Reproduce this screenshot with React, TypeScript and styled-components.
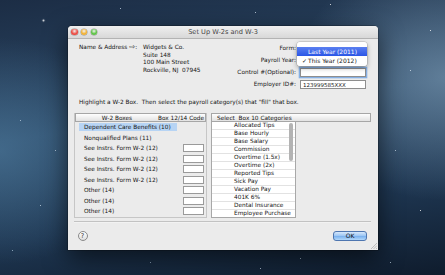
import styled, { createGlobalStyle } from 'styled-components'

const GlobalStyle = createGlobalStyle`
  html, body {
    margin: 0;
    padding: 0;
  }
  body {
    width: 445px;
    height: 275px;
    overflow: hidden;
    font-family: 'DejaVu Sans', 'Liberation Sans', sans-serif;
    color: #151515;
  }
`

const Desktop = styled.div`
  position: relative;
  width: 445px;
  height: 275px;
  box-sizing: border-box;
  padding: 26px 67px 0 68px;
  overflow: hidden;
  background:
    radial-gradient(ellipse 45% 60% at 100% 28%, rgba(130, 160, 185, 0.6), transparent 75%),
    radial-gradient(ellipse 40% 55% at 0% 55%, rgba(80, 125, 160, 0.6), transparent 75%),
    linear-gradient(172deg, #1c2d45 0%, #2c4a68 42%, #1e3651 72%, #0f1c2d 100%);

  &::before {
    content: '';
    position: absolute;
    left: 0;
    top: 0;
    width: 1px;
    height: 1px;
    border-radius: 50%;
    box-shadow:
      43px 20px 1px 0.5px #fff, 120px 8px 0 #cfe0ee, 255px 12px 0 #dce8f2, 330px 4px 0 #fff,
      20px 120px 0 #bcd0e0, 40px 205px 0 #cfe0ee, 12px 250px 0 #a9c2d8, 410px 70px 0 #dce8f2,
      395px 150px 0 #cfe0ee, 420px 210px 0.5px #fff, 390px 262px 0 #bcd0e0, 150px 262px 0 #a9c2d8,
      260px 268px 0 #cfe0ee, 430px 30px 0 #fff, 300px 258px 0 #bcd0e0, 55px 150px 0 #cfe0ee;
  }
`

const Window = styled.div`
  position: relative;
  width: 310px;
  height: 224px;
  display: flex;
  flex-direction: column;
  background: #ebebeb;
  border-radius: 4px 4px 0 0;
  box-shadow: 0 8px 24px rgba(0, 0, 0, 0.6), 0 0 0 0.5px rgba(0, 0, 0, 0.4);
  font-size: 5.8px;
`

const TitleBar = styled.div`
  height: 12px;
  display: grid;
  grid-template-columns: 1fr auto 1fr;
  align-items: center;
  padding: 0 3px;
  background: linear-gradient(#efefef, #d8d8d8);
  border-bottom: 0.5px solid #b3b3b3;
  border-radius: 4px 4px 0 0;
`

const Lights = styled.div`
  display: flex;
  gap: 3.3px;
`

const Light = styled.span<{ $c: string }>`
  width: 6.6px;
  height: 6.6px;
  border-radius: 50%;
  background: radial-gradient(circle at 50% 35%, #fff8 0%, ${(p) => p.$c} 55%);
  box-shadow: 0 0 0 0.5px rgba(0, 0, 0, 0.35);
`

const Title = styled.div`
  font-size: 6.6px;
  color: #454545;
`

const Body = styled.div`
  flex: 1;
  display: flex;
  flex-direction: column;
  padding: 3px 7px 0 6px;
`

const TopRow = styled.div`
  display: flex;
  justify-content: space-between;
  padding: 0 5px;
`

const AddressBlock = styled.div`
  display: grid;
  grid-template-columns: 61px auto;
  column-gap: 3px;
  padding-top: 2px;
  line-height: 7.7px;
`

const AddrLabel = styled.div`
  white-space: nowrap;
`

const Arrow = styled.span`
  font-size: 7px;
`

const FormGrid = styled.div`
  position: relative;
  display: grid;
  grid-template-columns: auto 67px;
  grid-auto-rows: 12px;
  column-gap: 3px;
  align-items: center;
`

const FieldLabel = styled.div`
  text-align: right;
  white-space: nowrap;
`

const Popup = styled.div`
  height: 9px;
  box-sizing: border-box;
  border: 0.5px solid #9c9c9c;
  border-radius: 3px;
  background: linear-gradient(#fff, #ececec);
`

const TextBox = styled.div<{ $focus?: boolean }>`
  height: 9px;
  box-sizing: border-box;
  margin-left: 1px;
  padding-left: 2px;
  border: 0.5px solid #8e8e8e;
  background: #fff;
  line-height: 8px;
  font-size: 5.5px;
  ${(p) => p.$focus && 'box-shadow: 0 0 0 1.3px #86b0e4;'}
`

const Menu = styled.div`
  position: absolute;
  top: 0;
  right: -1px;
  width: 70px;
  height: 24px;
  box-sizing: border-box;
  padding-top: 5px;
  background: rgba(255, 255, 255, 0.98);
  border-radius: 3px;
  box-shadow: 0 2px 5px rgba(0, 0, 0, 0.35), 0 0 0 0.5px rgba(0, 0, 0, 0.2);
`

const MenuItem = styled.div<{ $active?: boolean }>`
  height: 9px;
  display: flex;
  align-items: center;
  padding-left: 5px;
  white-space: nowrap;
  font-size: 6px;
  ${(p) =>
    p.$active &&
    `
    background: linear-gradient(#5a7ff0, #2b56e6);
    color: #fff;
  `}
`

const Check = styled.span`
  width: 6px;
  display: inline-block;
`

const Instruction = styled.div`
  margin-top: 8px;
  padding-left: 5px;
  line-height: 8px;
  white-space: nowrap;
`

const Tables = styled.div`
  margin-top: 7px;
  height: 105px;
  display: grid;
  grid-template-columns: 133px 1fr;
  column-gap: 4px;
`

const BoxTable = styled.div`
  display: flex;
  flex-direction: column;
  border: 0.5px solid #c6c6c6;
  border-top: none;
`

const HeaderBar = styled.div`
  height: 9px;
  box-sizing: border-box;
  display: flex;
  align-items: center;
  border: 0.5px solid #a6a6a6;
  background: linear-gradient(#fefefe, #e2e2e2);
  white-space: nowrap;
`

const BoxHeaderMain = styled.div`
  width: 83px;
  text-align: center;
`

const BoxHeaderCode = styled.div`
  flex: 1;
  text-align: right;
  padding-right: 1px;
`

const BoxRow = styled.div`
  height: 10.5px;
  display: grid;
  grid-template-columns: 102px 1fr;
  align-items: center;
`

const BoxName = styled.div<{ $selected?: boolean }>`
  margin-left: 4px;
  height: 8px;
  line-height: 8px;
  padding-left: 5px;
  white-space: nowrap;
  background: ${(p) => (p.$selected ? '#b7d4f4' : 'transparent')};
`

const CodeInput = styled.div`
  margin-left: 6px;
  width: 21px;
  height: 8px;
  box-sizing: border-box;
  border: 0.5px solid #9a9a9a;
  background: #fff;
`

const CatPanel = styled.div`
  display: flex;
  flex-direction: column;
`

const CatHeader = styled(HeaderBar)`
  padding-left: 5px;
`

const CatList = styled.div`
  position: relative;
  width: 85px;
  height: 96px;
  box-sizing: border-box;
  border: 0.5px solid #a8a8a8;
  border-top: none;
  background: #fff;
  overflow: hidden;
`

const CatRow = styled.div`
  height: 8px;
  box-sizing: border-box;
  line-height: 7.5px;
  padding: 0 5px 0 22px;
  border-bottom: 0.5px solid #e2e2e2;
  white-space: nowrap;
  overflow: hidden;
`

const ScrollThumb = styled.div`
  position: absolute;
  right: 2px;
  top: 1px;
  width: 4px;
  height: 38px;
  border-radius: 2px;
  background: #b3b3b3;
`

const Divider = styled.div`
  margin-top: 3px;
  height: 0.5px;
  background: #c2c2c2;
  box-shadow: 0 0.5px 0 #fafafa;
`

const Footer = styled.div`
  flex: 1;
  display: flex;
  align-items: center;
  justify-content: space-between;
  padding: 0 4px 0 3.5px;
`

const HelpButton = styled.div`
  width: 10px;
  height: 10px;
  box-sizing: border-box;
  border-radius: 50%;
  border: 0.5px solid #8a8a8a;
  background: linear-gradient(#ffffff, #dedede);
  display: grid;
  place-items: center;
  font-size: 6.5px;
  color: #333;
`

const OkButton = styled.div`
  width: 34px;
  height: 10px;
  box-sizing: border-box;
  border-radius: 3px;
  border: 0.5px solid #4e76b0;
  background: linear-gradient(#d6e8fc 0%, #9cc6f3 48%, #78b0ee 52%, #b3d8fa 100%);
  display: grid;
  place-items: center;
  font-size: 6px;
`

const Grip = styled.svg`
  position: absolute;
  right: 1px;
  bottom: 1px;
`

const address = ['Widgets & Co.', 'Suite 148', '100 Main Street', 'Rockville, NJ  07945']

const boxes = [
  { name: 'Dependent Care Benefits (10)', selected: true, code: false },
  { name: 'Nonqualified Plans (11)', code: false },
  { name: 'See Instrs. Form W-2 (12)', code: true },
  { name: 'See Instrs. Form W-2 (12)', code: true },
  { name: 'See Instrs. Form W-2 (12)', code: true },
  { name: 'See Instrs. Form W-2 (12)', code: true },
  { name: 'Other (14)', code: true },
  { name: 'Other (14)', code: true },
  { name: 'Other (14)', code: true },
]

const categories = [
  'Allocated Tips',
  'Base Hourly',
  'Base Salary',
  'Commission',
  'Overtime (1.5x)',
  'Overtime (2x)',
  'Reported Tips',
  'Sick Pay',
  'Vacation Pay',
  '401K 6%',
  'Dental Insurance',
  'Employee Purchase',
]

export default function App() {
  return (
    <>
      <GlobalStyle />
      <Desktop>
        <Window>
          <TitleBar>
            <Lights>
              <Light $c='#ec4b42' />
              <Light $c='#f2b132' />
              <Light $c='#5cc443' />
            </Lights>
            <Title>Set Up W-2s and W-3</Title>
            <span />
          </TitleBar>
          <Body>
            <TopRow>
              <AddressBlock>
                <AddrLabel>
                  Name &amp; Address <Arrow>⇨</Arrow>:
                </AddrLabel>
                <div>
                  {address.map((line) => (
                    <div key={line} style={{ whiteSpace: 'pre' }}>
                      {line}
                    </div>
                  ))}
                </div>
              </AddressBlock>
              <FormGrid>
                <FieldLabel>Form:</FieldLabel>
                <Popup />
                <FieldLabel>Payroll Year:</FieldLabel>
                <Popup />
                <FieldLabel>Control #(Optional):</FieldLabel>
                <TextBox $focus />
                <FieldLabel>Employer ID#:</FieldLabel>
                <TextBox>123999585XXX</TextBox>
                <Menu>
                  <MenuItem $active>
                    <Check />
                    Last Year (2011)
                  </MenuItem>
                  <MenuItem>
                    <Check>✓</Check>
                    This Year (2012)
                  </MenuItem>
                </Menu>
              </FormGrid>
            </TopRow>
            <Instruction>
              Highlight a W-2 Box.&nbsp; Then select the payroll category(s) that "fill" that box.
            </Instruction>
            <Tables>
              <BoxTable>
                <HeaderBar>
                  <BoxHeaderMain>W-2 Boxes</BoxHeaderMain>
                  <BoxHeaderCode>Box 12/14 Code</BoxHeaderCode>
                </HeaderBar>
                {boxes.map((b, i) => (
                  <BoxRow key={i}>
                    <BoxName $selected={b.selected}>{b.name}</BoxName>
                    {b.code ? <CodeInput /> : <span />}
                  </BoxRow>
                ))}
              </BoxTable>
              <CatPanel>
                <CatHeader>Select&nbsp; Box 10 Categories</CatHeader>
                <CatList>
                  {categories.map((c) => (
                    <CatRow key={c}>{c}</CatRow>
                  ))}
                  <ScrollThumb />
                </CatList>
              </CatPanel>
            </Tables>
            <Divider />
            <Footer>
              <HelpButton>?</HelpButton>
              <OkButton>OK</OkButton>
            </Footer>
          </Body>
          <Grip width='7' height='7' viewBox='0 0 7 7'>
            <path d='M1 7 L7 1 M3.5 7 L7 3.5 M6 7 L7 6' stroke='#a0a0a0' strokeWidth='0.6' />
          </Grip>
        </Window>
      </Desktop>
    </>
  )
}
